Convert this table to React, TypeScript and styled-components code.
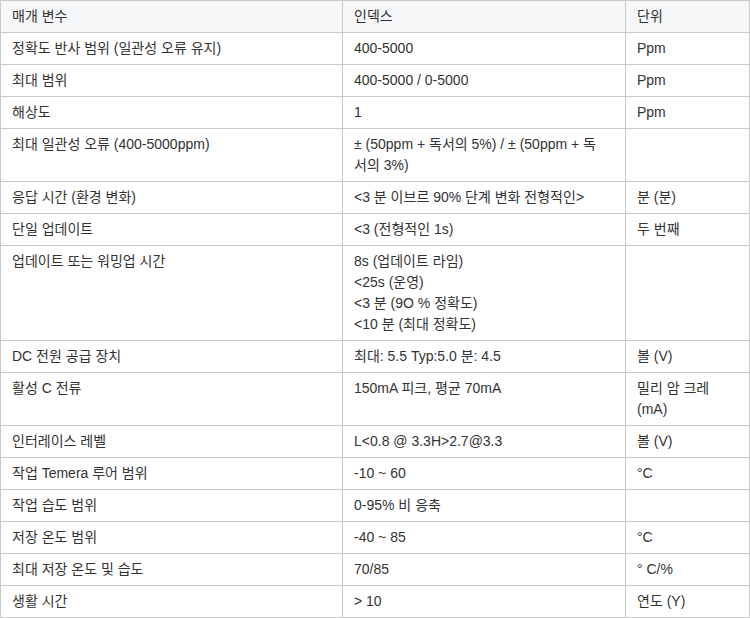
import React from 'react';
import styled, { createGlobalStyle } from 'styled-components';

const GlobalStyle = createGlobalStyle`
  html, body {
    margin: 0;
    padding: 0;
    background: #ffffff;
  }
  body {
    font-family: 'Liberation Sans', Arial, 'Noto Sans CJK KR', sans-serif;
  }
`;

const SpecTable = styled.table`
  width: 750px;
  table-layout: fixed;
  border-collapse: separate;
  border-spacing: 0;
  border-top: 1px solid #c9c9c9;
  border-left: 1px solid #c9c9c9;
  font-size: 14px;
  line-height: 21px;
  color: #333333;
`;

const HeadCell = styled.th`
  background: #f6f7f9;
  font-weight: normal;
  text-align: left;
  vertical-align: top;
  padding: 5px 11px 5px 11px;
  border-right: 1px solid #c9c9c9;
  border-bottom: 1px solid #c9c9c9;
`;

const Cell = styled.td`
  text-align: left;
  vertical-align: top;
  padding: 5px 11px 5px 11px;
  border-right: 1px solid #c9c9c9;
  border-bottom: 1px solid #c9c9c9;
`;

type Row = [string, string[], string[]];

const rows: Row[] = [
  ['정확도 반사 범위 (일관성 오류 유지)', ['400-5000'], ['Ppm']],
  ['최대 범위', ['400-5000 / 0-5000'], ['Ppm']],
  ['해상도', ['1'], ['Ppm']],
  ['최대 일관성 오류 (400-5000ppm)', ['± (50ppm + 독서의 5%) / ± (50ppm + 독', '서의 3%)'], []],
  ['응답 시간 (환경 변화)', ['<3 분 이브르 90% 단계 변화 전형적인>'], ['분 (분)']],
  ['단일 업데이트', ['<3 (전형적인 1s)'], ['두 번째']],
  ['업데이트 또는 워밍업 시간', ['8s (업데이트 라임)', '<25s (운영)', '<3 분 (9O % 정확도)', '<10 분 (최대 정확도)'], []],
  ['DC 전원 공급 장치', ['최대: 5.5 Typ:5.0 분: 4.5'], ['볼 (V)']],
  ['활성 C 전류', ['150mA 피크, 평균 70mA'], ['밀리 암 크레', '(mA)']],
  ['인터레이스 레벨', ['L<0.8 @ 3.3H>2.7@3.3'], ['볼 (V)']],
  ['작업 Temera 루어 범위', ['-10 ~ 60'], ['°C']],
  ['작업 습도 범위', ['0-95% 비 응축'], []],
  ['저장 온도 범위', ['-40 ~ 85'], ['°C']],
  ['최대 저장 온도 및 습도', ['70/85'], ['° C/%']],
  ['생활 시간', ['> 10'], ['연도 (Y)']],
];

function Lines({ items }: { items: string[] }) {
  return (
    <>
      {items.map((v, i) => (
        <React.Fragment key={v}>
          {i > 0 && <br />}
          {v}
        </React.Fragment>
      ))}
    </>
  );
}

function App() {
  return (
    <>
      <GlobalStyle />
      <SpecTable>
        <colgroup>
          <col style={{ width: 342 }} />
          <col style={{ width: 283 }} />
          <col style={{ width: 124 }} />
        </colgroup>
        <thead>
          <tr>
            <HeadCell>매개 변수</HeadCell>
            <HeadCell>인덱스</HeadCell>
            <HeadCell>단위</HeadCell>
          </tr>
        </thead>
        <tbody>
          {rows.map(([name, values, unit]) => (
            <tr key={name}>
              <Cell>{name}</Cell>
              <Cell>
                <Lines items={values} />
              </Cell>
              <Cell>
                <Lines items={unit} />
              </Cell>
            </tr>
          ))}
        </tbody>
      </SpecTable>
    </>
  );
}

export default App;
